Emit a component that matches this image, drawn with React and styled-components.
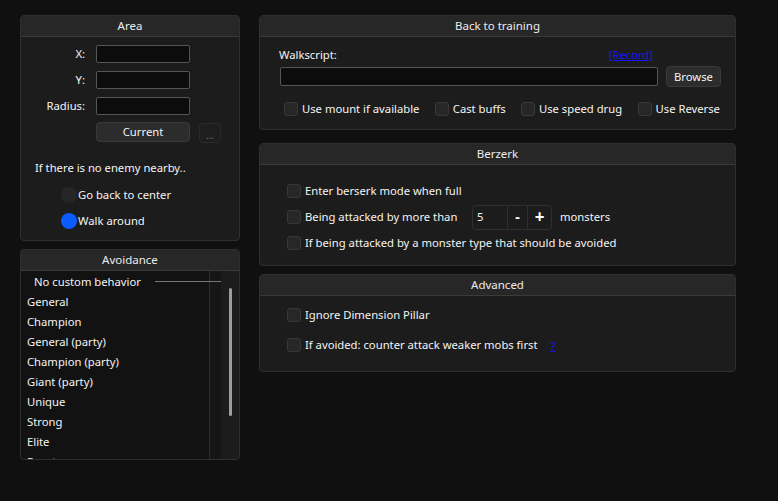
import React from "react";
import styled, { createGlobalStyle } from "styled-components";

const Global = createGlobalStyle`
  html, body { margin: 0; padding: 0; background: #101010; }
  body { font-family: "Noto Sans", "Open Sans", sans-serif; font-size: 11.25px; color: #f4f4f4; }
  * { box-sizing: border-box; }
`;

const Page = styled.div`
  width: 778px;
  height: 501px;
  background: #101010;
  display: flex;
  align-items: flex-start;
  gap: 19px;
  padding: 15px 0 0 20px;
  overflow: hidden;
`;

const Column = styled.div`
  width: ${(p) => p.$width}px;
  display: flex;
  flex-direction: column;
`;

const Panel = styled.section`
  height: ${(p) => p.$height}px;
  margin-top: ${(p) => p.$mt || 0}px;
  border: 1px solid #2f2f2f;
  border-radius: 4px;
  background: #1c1c1c;
  display: flex;
  flex-direction: column;
  overflow: hidden;
`;

const Header = styled.div`
  height: 21px;
  flex: none;
  background: #272727;
  border-bottom: 1px solid #3a3a3a;
  display: flex;
  align-items: center;
  justify-content: center;
  color: #ececec;
  font-size: 11.5px;
  line-height: 16px;
`;

const AreaBody = styled.div`
  padding-top: 8px;
  display: flex;
  flex-direction: column;
`;

const FormGrid = styled.div`
  margin-left: 20px;
  display: grid;
  grid-template-columns: 44px 94px 22px;
  grid-auto-rows: 18px;
  column-gap: 11px;
  row-gap: 8px;
  align-items: center;
`;

const Label = styled.label`
  justify-self: end;
  line-height: 16px;
`;

const TextBox = styled.div`
  height: ${(p) => p.$h || 18}px;
  background: #0c0c0c;
  border: 1px solid #555;
  border-radius: 2px;
  ${(p) => (p.$grow ? "flex: 1;" : "")}
`;

const Button = styled.button`
  height: ${(p) => p.$h || 20}px;
  ${(p) => (p.$width ? `width: ${p.$width}px;` : "")}
  background: #2c2c2c;
  border: 1px solid #3a3a3a;
  border-radius: 4px;
  color: #f4f4f4;
  font: inherit;
  padding: 0;
  display: flex;
  align-items: center;
  justify-content: center;
  line-height: 16px;
`;

const MoreButton = styled.button`
  height: 20px;
  width: 22px;
  margin-left: -2px;
  margin-top: 1px;
  background: #1e1e1e;
  border: 1px solid #2a2a2a;
  border-radius: 4px;
  color: #6a6a6a;
  font: inherit;
  font-size: 10px;
  padding: 5px 0 0;
  line-height: 10px;
`;

const GridRowTall = styled.div`
  display: contents;
`;

const Note = styled.div`
  margin-top: 19px;
  padding-left: 14px;
  line-height: 16px;
`;

const RadioGroup = styled.div`
  margin-top: 11px;
  padding-left: 40px;
  display: flex;
  flex-direction: column;
  gap: 10px;
`;

const RadioRow = styled.div`
  display: flex;
  align-items: center;
  gap: 1px;
  height: 16px;
  line-height: 16px;
`;

const RadioDot = styled.span`
  width: 16px;
  height: 16px;
  border-radius: 50%;
  background: ${(p) => (p.$on ? "#0a5cff" : "#262626")};
  flex: none;
`;

const ListBody = styled.div`
  flex: 1;
  display: flex;
  min-height: 0;
`;

const ListViewport = styled.div`
  width: 200px;
  padding-top: 0.5px;
  overflow: hidden;
  background: linear-gradient(to right, #121212 188px, #2b2f3a 188px 189px, #151515 189px);
`;

const GroupHeader = styled.div`
  height: 20px;
  display: flex;
  align-items: center;
  gap: 14px;
  padding-left: 13px;
  line-height: 16px;
  &::after {
    content: "";
    flex: 1;
    height: 1px;
    background: #777;
  }
`;

const ListItem = styled.div`
  height: 20px;
  display: flex;
  align-items: center;
  padding-left: 6px;
  line-height: 16px;
  white-space: nowrap;
`;

const ScrollTrack = styled.div`
  width: 17px;
  background: #1c1c1c;
  padding-top: 17px;
  display: flex;
  justify-content: center;
`;

const ScrollThumb = styled.div`
  width: 3px;
  height: 128px;
  margin-left: 1px;
  border-radius: 2px;
  background: #9e9e9e;
`;

const TrainingBody = styled.div`
  padding: 10px 14px 0 20px;
  display: flex;
  flex-direction: column;
`;

const ScriptLabelRow = styled.div`
  display: flex;
  justify-content: space-between;
  width: 377px;
  line-height: 16px;
  padding-right: 3px;
  margin-left: -1px;
`;

const Link = styled.a`
  color: #1414ff;
  text-decoration: underline;
  cursor: pointer;
  margin-left: ${(p) => p.$ml || 0}px;
`;

const InputRow = styled.div`
  margin-top: 3px;
  display: flex;
  align-items: center;
  gap: 8px;
`;

const OptionsRow = styled.div`
  margin-top: 14px;
  padding: 0 1px 0 4px;
  display: flex;
  justify-content: space-between;
`;

const CheckItem = styled.label`
  display: flex;
  align-items: center;
  gap: 4px;
  height: 16px;
  line-height: 16px;
  white-space: nowrap;
  ${(p) => (p.$width ? `width: ${p.$width}px; flex: none;` : "")}
`;

const Box = styled.span`
  width: 14px;
  height: 14px;
  flex: none;
  background: #272727;
  border: 1px solid #383838;
  border-radius: 3px;
`;

const BerzerkBody = styled.div`
  padding: 13px 0 0 27px;
  display: flex;
  flex-direction: column;
`;

const FixedRow = styled.div`
  height: ${(p) => p.$h}px;
  display: flex;
  align-items: center;
`;

const SpinBox = styled.div`
  display: flex;
  height: 25px;
  width: 80px;
  border: 1px solid #303030;
  border-radius: 4px;
  background: #1c1c1c;
  overflow: hidden;
`;

const SpinValue = styled.div`
  width: 35px;
  padding-left: 4px;
  display: flex;
  align-items: center;
  border-right: 1px solid #303030;
  line-height: 16px;
`;

const SpinBtn = styled.div`
  width: ${(p) => p.$w}px;
  display: flex;
  align-items: center;
  justify-content: center;
  font-weight: 700;
  font-size: ${(p) => p.$fs}px;
  line-height: 16px;
  color: #fff;
  ${(p) => (p.$sep ? "border-right: 1px solid #303030;" : "")}
`;

const AfterText = styled.span`
  margin-left: 8px;
  line-height: 16px;
`;

const AdvancedBody = styled.div`
  padding: 11px 0 0 27px;
  display: flex;
  flex-direction: column;
  gap: 14px;
`;

const Check = ({ children, width }) => (
  <CheckItem $width={width}>
    <Box />
    <span>{children}</span>
  </CheckItem>
);

const avoid = [
  "General",
  "Champion",
  "General (party)",
  "Champion (party)",
  "Giant (party)",
  "Unique",
  "Strong",
  "Elite",
  "Event",
];

export default function App() {
  return (
    <>
      <Global />
      <Page>
        <Column $width={220}>
          <Panel $height={226}>
            <Header>Area</Header>
            <AreaBody>
              <FormGrid>
                <Label>X:</Label>
                <TextBox />
                <span />
                <Label>Y:</Label>
                <TextBox />
                <span />
                <Label>Radius:</Label>
                <TextBox />
                <span />
                <GridRowTall>
                  <span />
                  <Button>Current</Button>
                  <MoreButton>...</MoreButton>
                </GridRowTall>
              </FormGrid>
              <Note>If there is no enemy nearby..</Note>
              <RadioGroup>
                <RadioRow>
                  <RadioDot />
                  Go back to center
                </RadioRow>
                <RadioRow>
                  <RadioDot $on />
                  Walk around
                </RadioRow>
              </RadioGroup>
            </AreaBody>
          </Panel>
          <Panel $height={211} $mt={8}>
            <Header>Avoidance</Header>
            <ListBody>
              <ListViewport>
                <GroupHeader>No custom behavior</GroupHeader>
                {avoid.map((a) => (
                  <ListItem key={a}>{a}</ListItem>
                ))}
              </ListViewport>
              <ScrollTrack>
                <ScrollThumb />
              </ScrollTrack>
            </ListBody>
          </Panel>
        </Column>
        <Column $width={477}>
          <Panel $height={115}>
            <Header>Back to training</Header>
            <TrainingBody>
              <ScriptLabelRow>
                <span>Walkscript:</span>
                <Link>[Record]</Link>
              </ScriptLabelRow>
              <InputRow>
                <TextBox $h={19} $grow />
                <Button $h={21} $width={55}>
                  Browse
                </Button>
              </InputRow>
              <OptionsRow>
                <Check>Use mount if available</Check>
                <Check>Cast buffs</Check>
                <Check>Use speed drug</Check>
                <Check>Use Reverse</Check>
              </OptionsRow>
            </TrainingBody>
          </Panel>
          <Panel $height={123} $mt={13}>
            <Header>Berzerk</Header>
            <BerzerkBody>
              <FixedRow $h={26}>
                <Check>Enter berserk mode when full</Check>
              </FixedRow>
              <FixedRow $h={26}>
                <Check width={185}>Being attacked by more than</Check>
                <SpinBox>
                  <SpinValue>5</SpinValue>
                  <SpinBtn $w={20} $fs={14} $sep>
                    -
                  </SpinBtn>
                  <SpinBtn $w={23} $fs={17}>
                    +
                  </SpinBtn>
                </SpinBox>
                <AfterText>monsters</AfterText>
              </FixedRow>
              <FixedRow $h={26}>
                <Check>If being attacked by a monster type that should be avoided</Check>
              </FixedRow>
            </BerzerkBody>
          </Panel>
          <Panel $height={98} $mt={8}>
            <Header>Advanced</Header>
            <AdvancedBody>
              <FixedRow $h={16}>
                <Check>Ignore Dimension Pillar</Check>
              </FixedRow>
              <FixedRow $h={16}>
                <Check>If avoided: counter attack weaker mobs first</Check>
                <Link $ml={13}>?</Link>
              </FixedRow>
            </AdvancedBody>
          </Panel>
        </Column>
      </Page>
    </>
  );
}
